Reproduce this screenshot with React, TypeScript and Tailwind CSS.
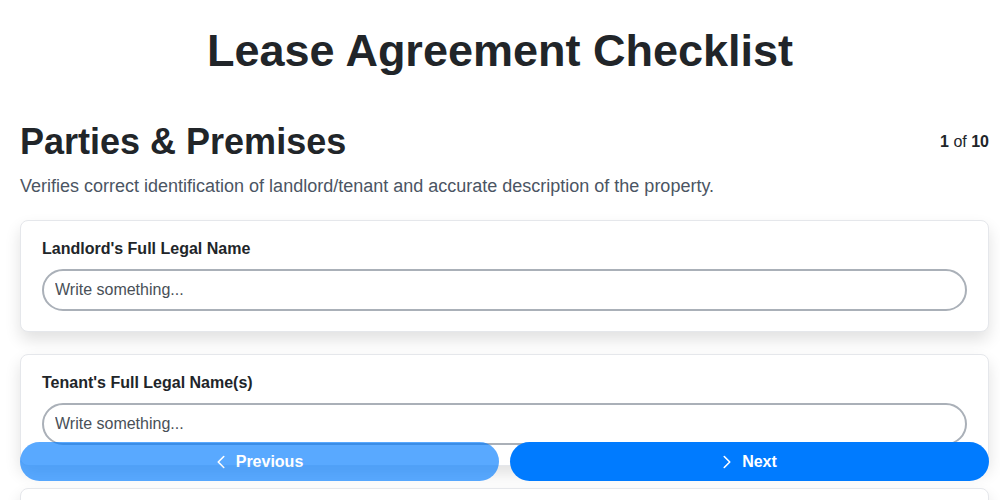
import { ChevronLeft, ChevronRight } from "lucide-react";

const fields = [
  "Landlord's Full Legal Name",
  "Tenant's Full Legal Name(s)",
  "Property Address",
];

function FieldCard({ label }: { label: string }) {
  return (
    <div className="rounded-lg border border-[#e5e7eb] bg-white px-[21px] pt-[19px] pb-[20px] shadow-[0_8px_16px_rgba(0,0,0,0.12)]">
      <label className="block text-[16px] font-bold leading-[18px] text-[#212529]">
        {label}
      </label>
      <input
        type="text"
        placeholder="Write something..."
        className="mt-[11px] block h-[42px] w-full rounded-full border-2 border-[#aab0b8] bg-white px-[11px] text-[16px] text-[#212529] outline-none placeholder:text-[#495057]"
      />
    </div>
  );
}

export default function App() {
  return (
    <div className="h-screen overflow-hidden bg-white font-['Liberation_Sans',Arial,sans-serif] text-[#212529]">
      <h1 className="pt-[23px] text-center text-[45px] font-bold leading-[55px]">
        Lease Agreement Checklist
      </h1>

      <div className="pl-5 pr-[11px] pb-24">
        <div className="mt-[42px] flex items-center justify-between">
          <h2 className="text-[36px] font-bold leading-[44px]">Parties &amp; Premises</h2>
          <div className="text-[16px]">
            <span className="font-bold">1</span> of <span className="font-bold">10</span>
          </div>
        </div>
        <p className="mt-[10px] text-[18px] leading-[24px] text-[#4b5563]">
          Verifies correct identification of landlord/tenant and accurate description of the property.
        </p>

        <div className="mt-[22px] flex flex-col gap-[22px]">
          {fields.map((f) => (
            <FieldCard key={f} label={f} />
          ))}
        </div>
      </div>

      <div className="fixed bottom-[19px] left-5 right-[11px] flex gap-[11px]">
        <button
          type="button"
          className="flex h-[39px] flex-1 items-center justify-center gap-1 rounded-full bg-[#007bff] pr-[6px] text-[16px] font-bold text-white opacity-65"
        >
          <ChevronLeft size={22} strokeWidth={1.75} />
          Previous
        </button>
        <button
          type="button"
          className="flex h-[39px] flex-1 items-center justify-center gap-1 rounded-full bg-[#007bff] pr-[6px] text-[16px] font-bold text-white"
        >
          <ChevronRight size={22} strokeWidth={1.75} />
          Next
        </button>
      </div>
    </div>
  );
}
